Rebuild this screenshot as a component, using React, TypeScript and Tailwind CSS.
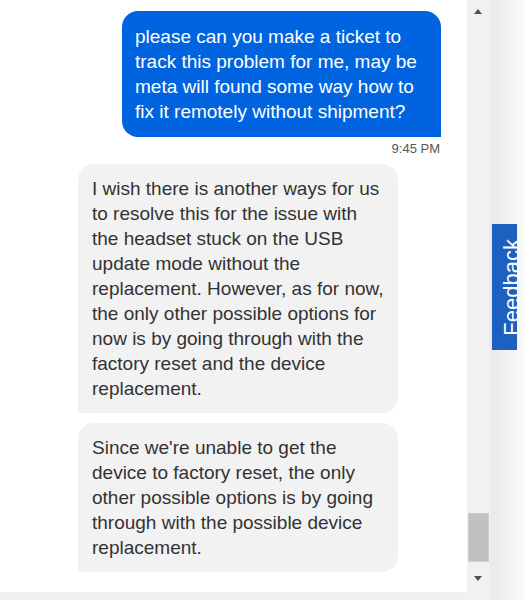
export default function App() {
  return (
    <div className="flex h-[600px] w-[525px] overflow-hidden bg-white font-['Liberation_Sans',Arial,sans-serif]">
      {/* chat column */}
      <div className="flex w-[467px] flex-col">
        <div className="flex-1 overflow-hidden">
          <div className="-mt-[13px] pl-[85px] text-[13px] leading-[16px] text-[#444]">mira</div>

          <div className="ml-[122px] mt-[8px] w-[319px] rounded-[16px] rounded-br-none bg-[#0064e0] px-[13px] py-[13px] text-[19px] leading-[25px] text-white">
            please can you make a ticket to track this problem for me, may be meta will found some way how to fix it remotely without shipment?
          </div>
          <div className="mr-[27px] mt-[4px] text-right text-[13px] leading-[16px] text-[#555]">9:45 PM</div>

          <div className="ml-[78px] mt-[7px] w-[320px] rounded-[16px] rounded-bl-none bg-[#f2f2f2] px-[14px] py-[12px] text-[19px] leading-[25px] text-[#333]">
            I wish there is another ways for us to resolve this for the issue with the headset stuck on the USB update mode without the replacement. However, as for now, the only other possible options for now is by going through with the factory reset and the device replacement.
          </div>
          <div className="ml-[78px] mt-[10px] w-[320px] rounded-[16px] rounded-bl-none bg-[#f2f2f2] px-[14px] py-[12px] text-[19px] leading-[25px] text-[#333]">
            Since we're unable to get the device to factory reset, the only other possible options is by going through with the possible device replacement.
          </div>
        </div>
        <div className="h-[8px] bg-[#f0f0f0]" />
      </div>

      {/* scrollbar */}
      <div className="relative w-[23px] bg-[#f1f1f1]">
        <div className="absolute left-[7px] top-[9px] h-0 w-0 border-x-[4px] border-b-[5px] border-x-transparent border-b-[#505050]" />
        <div className="absolute left-[1px] top-[513px] h-[49px] w-[21px] border border-[#cdcdcd] bg-[#c1c1c1]" />
        <div className="absolute left-[7px] top-[576px] h-0 w-0 border-x-[4px] border-t-[5px] border-x-transparent border-t-[#505050]" />
      </div>

      {/* right rail with feedback tab */}
      <div className="w-[35px] bg-gradient-to-r from-[#e9e9e9] to-[#fbfbfb]">
        <div className="ml-[2px] mt-[224px] flex h-[126px] w-[25px] items-center justify-start overflow-hidden bg-[#1d60c0]">
          <span className="ml-[9px] shrink-0 rotate-180 text-[22px] leading-[22px] text-white [writing-mode:vertical-rl]">Feedback</span>
        </div>
      </div>
    </div>
  );
}
